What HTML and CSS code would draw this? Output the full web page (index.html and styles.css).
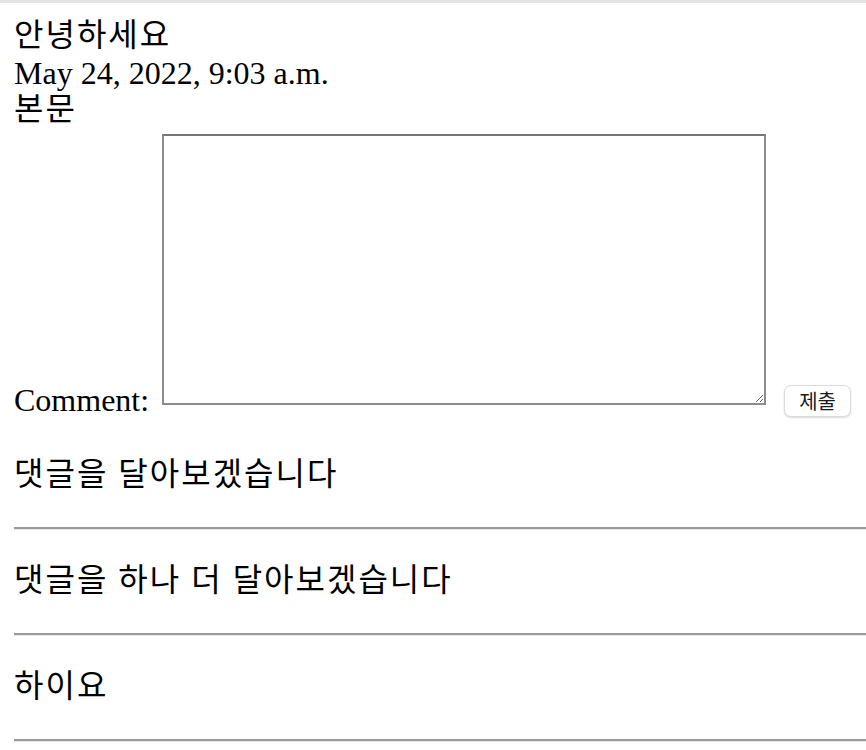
FILE: index.html
```html
<!DOCTYPE html>
<html lang="ko">
<head>
    <meta charset="UTF-8">
    <meta name="viewport" content="width=device-width, initial-scale=1.0">
    <title>안녕하세요</title>
    <link rel="stylesheet" href="styles.css">
</head>
<body>
    <div class="post-title">안녕하세요</div>
    <div class="post-date">May 24, 2022, 9:03 a.m.</div>
    <div class="post-body">본문</div>

    <form class="comment-form" method="post">
        <label for="id_text">Comment:</label>
        <textarea name="text" id="id_text"></textarea>
        <button type="submit">제출</button>
    </form>

    <p class="comment">댓글을 달아보겠습니다</p>
    <hr>
    <p class="comment">댓글을 하나 더 달아보겠습니다</p>
    <hr>
    <p class="comment">하이요</p>
    <hr>
</body>
</html>
```

FILE: styles.css
```css
body {
    font-family: "Liberation Serif", "Noto Sans CJK KR", serif;
    font-size: 32px;
    color: #000;
    background: #fff;
    margin: 0;
    border-top: 3px solid #e4e4e4;
    padding: 11px 0 0 14px;
    overflow: hidden;
}
.post-title {
    line-height: 42px;
    letter-spacing: 2px;
}
.post-date {
    line-height: 34px;
}
.post-body {
    line-height: 38px;
    letter-spacing: 2px;
}
.comment-form {
    display: flex;
    align-items: flex-end;
}
.comment-form label {
    line-height: 36px;
}
.comment-form textarea {
    box-sizing: border-box;
    width: 604px;
    height: 271px;
    margin: 6px 0 13px 13px;
    border: 2px solid #8c8c8c;
    border-top-color: #767676;
    padding: 4px;
    font: 26px "Liberation Mono", monospace;
}
.comment-form button {
    font-family: "Noto Sans CJK KR", sans-serif;
    font-size: 20px;
    line-height: 30px;
    height: 32px;
    width: 67px;
    padding: 0;
    margin: 0 0 1px 18px;
    background: #fff;
    color: #1a1a1a;
    border: 1px solid #dcdcdc;
    border-radius: 7px;
    box-shadow: 0 1px 2px rgba(0, 0, 0, 0.15);
}
.comment {
    margin: 26px 0 29px;
    line-height: 48px;
    letter-spacing: 2px;
}
.comment:first-of-type {
    margin-top: 32px;
}
hr {
    margin: 0;
    height: 0;
    border: none;
    border-top: 2px solid #999;
    border-bottom: 1px solid #e8e8e8;
}
```
